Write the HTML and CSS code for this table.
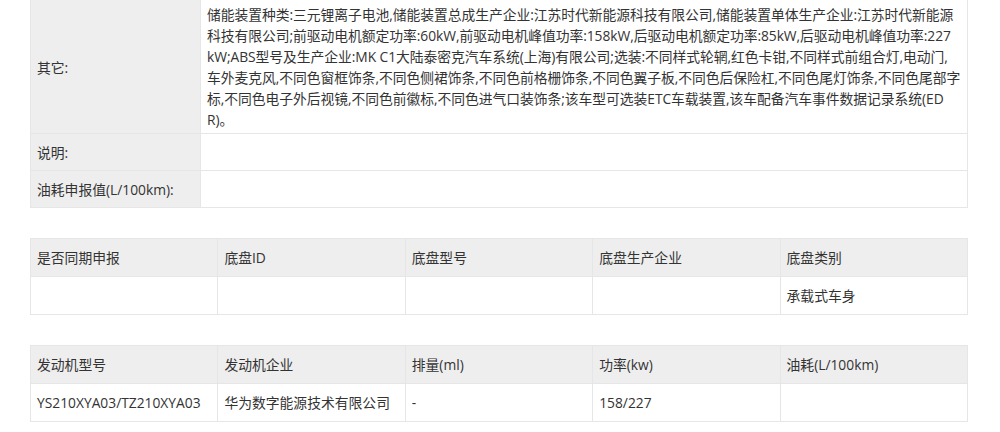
FILE: index.html
```html
<!DOCTYPE html>
<html lang="zh-CN">
<head>
<meta charset="utf-8">
<title>车辆参数</title>
<link rel="stylesheet" href="styles.css">
</head>
<body>
<div class="page">
  <table class="info">
    <colgroup><col class="c-label"><col></colgroup>
    <tr class="first">
      <th>其它:</th>
      <td class="long">储能装置种类:三元锂离子电池,储能装置总成生产企业:江苏时代新能源科技有限公司,储能装置单体生产企业:江苏时代新能源<br>科技有限公司;前驱动电机额定功率:60kW,前驱动电机峰值功率:158kW,后驱动电机额定功率:85kW,后驱动电机峰值功率:227<br>kW;ABS型号及生产企业:MK C1大陆泰密克汽车系统(上海)有限公司;选装:不同样式轮辋,红色卡钳,不同样式前组合灯,电动门,<br>车外麦克风,不同色窗框饰条,不同色侧裙饰条,不同色前格栅饰条,不同色翼子板,不同色后保险杠,不同色尾灯饰条,不同色尾部字<br>标,不同色电子外后视镜,不同色前徽标,不同色进气口装饰条;该车型可选装ETC车载装置,该车配备汽车事件数据记录系统(ED<br>R)。</td>
    </tr>
    <tr>
      <th>说明:</th>
      <td></td>
    </tr>
    <tr>
      <th>油耗申报值(L/100km):</th>
      <td></td>
    </tr>
  </table>

  <table class="grid">
    <tr class="head">
      <th>是否同期申报</th>
      <th>底盘ID</th>
      <th>底盘型号</th>
      <th>底盘生产企业</th>
      <th>底盘类别</th>
    </tr>
    <tr>
      <td></td>
      <td></td>
      <td></td>
      <td></td>
      <td>承载式车身</td>
    </tr>
  </table>

  <table class="grid">
    <tr class="head">
      <th>发动机型号</th>
      <th>发动机企业</th>
      <th>排量(ml)</th>
      <th>功率(kw)</th>
      <th>油耗(L/100km)</th>
    </tr>
    <tr>
      <td>YS210XYA03/TZ210XYA03</td>
      <td>华为数字能源技术有限公司</td>
      <td>-</td>
      <td>158/227</td>
      <td></td>
    </tr>
  </table>
</div>
</body>
</html>
```
FILE: styles.css
```css
html, body {
  margin: 0;
  padding: 0;
  background: #ffffff;
}
body {
  font-family: "Open Sans", "Noto Sans CJK SC", sans-serif;
  font-size: 13.8px;
  line-height: 21px;
  color: #333333;
}
.page {
  width: 938px;
  padding: 0 30px;
}
table {
  width: 938px;
  border-collapse: collapse;
  table-layout: fixed;
}
th, td {
  border: 1px solid #e6e6e6;
  text-align: left;
  font-weight: normal;
  padding: 8px 6px 7px;
  vertical-align: middle;
  white-space: nowrap;
}
.info {
  margin-top: -1px;
}
.info .c-label {
  width: 170px;
}
.info th {
  background: #eeeeee;
}
.info td.long {
  padding: 4px 6px 3px;
  letter-spacing: -0.05px;
}
.grid {
  margin-top: 30px;
}
.grid td {
  padding: 8px 6px 8px;
}
.grid .head th {
  background: #eeeeee;
  padding: 8px 6px 8px;
}
```
